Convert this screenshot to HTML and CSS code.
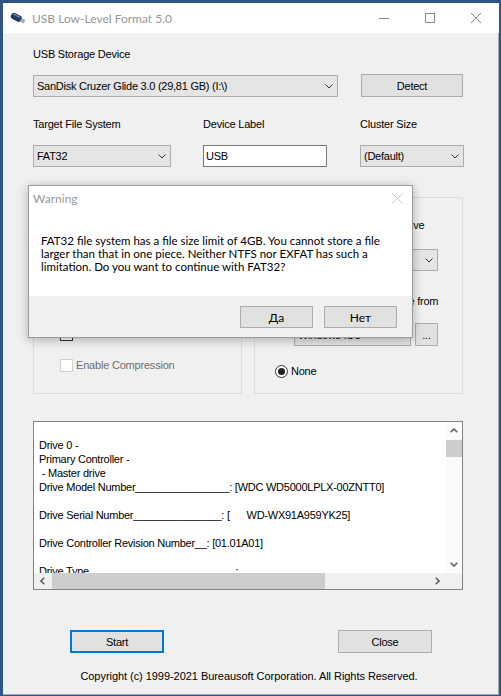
FILE: index.html
```html
<!DOCTYPE html>
<html lang="en">
<head>
<meta charset="utf-8">
<title>USB Low-Level Format 5.0</title>
<link rel="stylesheet" href="styles.css">
</head>
<body>
<div class="window">
  <div class="titlebar">
    <svg class="app-icon" width="16" height="12" viewBox="0 0 16 12">
      <g transform="rotate(28 8 6)">
        <rect x="0.5" y="3" width="11.5" height="6.5" rx="3" fill="#25395c"/>
        <rect x="11.3" y="4.3" width="4.2" height="4" rx="0.6" fill="#a2abb8"/>
        <path d="M2.6 4.6H9" stroke="#6f8ab8" stroke-width="1.2" stroke-linecap="round"/>
      </g>
    </svg>
    <span class="title">USB Low-Level Format 5.0</span>
    <div class="caption">
      <span class="cap-btn"><svg width="10" height="10" viewBox="0 0 10 10"><path d="M0 5.5H10" stroke="#8a8a8a"/></svg></span>
      <span class="cap-btn"><svg width="10" height="10" viewBox="0 0 10 10"><rect x="0.5" y="0.5" width="9" height="9" fill="none" stroke="#8a8a8a"/></svg></span>
      <span class="cap-btn"><svg width="10" height="10" viewBox="0 0 10 10"><path d="M0 0L10 10M10 0L0 10" stroke="#8a8a8a"/></svg></span>
    </div>
  </div>

  <div class="client">
    <div class="label">USB Storage Device</div>
    <div class="row-device">
      <div class="combo combo-device"><span class="value">SanDisk Cruzer Glide 3.0 (29,81 GB) (I:\)</span><svg class="chev" width="8" height="5" viewBox="0 0 8 5"><path d="M0.5 0.5L4 4L7.5 0.5" fill="none" stroke="#333"/></svg></div>
      <button class="btn btn-detect">Detect</button>
    </div>

    <div class="settings">
      <div class="label">Target File System</div>
      <div class="label">Device Label</div>
      <div class="label">Cluster Size</div>
      <div class="combo combo-fs"><span class="value">FAT32</span><svg class="chev" width="8" height="5" viewBox="0 0 8 5"><path d="M0.5 0.5L4 4L7.5 0.5" fill="none" stroke="#333"/></svg></div>
      <div class="textbox">USB</div>
      <div class="combo combo-cluster"><span class="value">(Default)</span><svg class="chev" width="8" height="5" viewBox="0 0 8 5"><path d="M0.5 0.5L4 4L7.5 0.5" fill="none" stroke="#333"/></svg></div>
    </div>

    <div class="groups">
      <div class="group group-options">
        <div class="check-row"><span class="checkbox"></span><span>Quick Format</span></div>
        <div class="check-row"><span class="checkbox"></span><span>Verify Sectors</span></div>
        <div class="check-row"><span class="checkbox"></span><span>Create Partition</span></div>
        <div class="check-row disabled"><span class="checkbox"></span><span>Enable Compression</span></div>
      </div>
      <div class="group group-boot">
        <div class="radio-row"><span class="radio"></span><span>Create a bootable USB drive</span></div>
        <div class="combo combo-boot"><span class="value">MS-DOS</span><svg class="chev" width="8" height="5" viewBox="0 0 8 5"><path d="M0.5 0.5L4 4L7.5 0.5" fill="none" stroke="#333"/></svg></div>
        <div class="radio-row r2"><span class="radio"></span><span>Use a bootable disk image from</span></div>
        <div class="image-row">
          <div class="combo combo-image"><span class="value">Windows ISO</span><span class="small-arrow">&#9662;</span></div>
          <button class="btn btn-browse">...</button>
        </div>
        <div class="radio-row r3"><span class="radio checked"><span class="dot"></span></span><span>None</span></div>
      </div>
    </div>

    <div class="log">
      <div class="log-text">Drive 0 -
Primary Controller -
 - Master drive
Drive Model Number________________: [WDC WD5000LPLX-00ZNTT0]

Drive Serial Number_______________: [      WD-WX91A959YK25]

Drive Controller Revision Number__: [01.01A01]

Drive Type_________________________: </div>
      <div class="vscroll">
        <span class="arrow"><svg width="8" height="5" viewBox="0 0 8 5"><path d="M0.7 4.3L4 1L7.3 4.3" fill="none" stroke="#606060" stroke-width="1.6"/></svg></span>
        <span class="vthumb"></span>
        <span class="spacer"></span>
        <span class="arrow"><svg width="8" height="5" viewBox="0 0 8 5"><path d="M0.7 0.7L4 4L7.3 0.7" fill="none" stroke="#606060" stroke-width="1.6"/></svg></span>
      </div>
      <div class="hscroll">
        <span class="harrow"><svg width="5" height="8" viewBox="0 0 5 8"><path d="M4.3 0.7L1 4L4.3 7.3" fill="none" stroke="#606060" stroke-width="1.6"/></svg></span>
        <span class="hthumb"></span>
        <span class="spacer"></span>
        <span class="harrow"><svg width="5" height="8" viewBox="0 0 5 8"><path d="M0.7 0.7L4 4L0.7 7.3" fill="none" stroke="#606060" stroke-width="1.6"/></svg></span>
      </div>
      <div class="corner"></div>
    </div>

    <div class="actions">
      <button class="btn btn-start">Start</button>
      <button class="btn btn-close">Close</button>
    </div>

    <div class="copyright">Copyright (c) 1999-2021 Bureausoft Corporation. All Rights Reserved.</div>
  </div>

  <div class="msgbox">
    <div class="msg-title">
      <span>Warning</span>
      <svg class="msg-x" width="11" height="11" viewBox="0 0 11 11"><path d="M0 0L11 11M11 0L0 11" stroke="#c8c8c8"/></svg>
    </div>
    <div class="msg-body">FAT32 file system has a file size limit of 4GB. You cannot store a file<br>larger than that in one piece. Neither NTFS nor EXFAT has such a<br>limitation. Do you want to continue with FAT32?</div>
    <div class="msg-footer">
      <button class="btn msg-btn">Да</button>
      <button class="btn msg-btn">Нет</button>
    </div>
  </div>
</div>
</body>
</html>
```

FILE: styles.css
```css
* { box-sizing: border-box; }
html, body { margin: 0; padding: 0; }
body {
  width: 501px;
  height: 696px;
  overflow: hidden;
  background: #2f5486;
  font-family: "Liberation Sans", Arial, sans-serif;
  font-size: 11px;
  color: #000;
}

.window {
  position: relative;
  margin: 3px 0 0 3px;
  width: 496px;
  height: 692px;
  background: #f0f0f0;
}

.titlebar {
  height: 30px;
  background: #fff;
  display: flex;
  align-items: center;
}
.app-icon { margin-left: 7px; flex: none; }
.title {
  margin-left: 6px;
  font-family: Lato, "Noto Sans", sans-serif;
  font-size: 12px;
  color: #999;
}
.caption { margin-left: auto; display: flex; height: 30px; }
.cap-btn {
  width: 46px;
  height: 30px;
  display: flex;
  align-items: center;
  justify-content: center;
}

.client {
  height: 662px;
  padding: 14px 0 0 30px;
  border-right: 1px solid #a8a8a8;
  border-bottom: 1px solid #a8a8a8;
}

.label {
  height: 14px;
  line-height: 14px;
  letter-spacing: -0.2px;
  white-space: nowrap;
}

.combo {
  display: flex;
  align-items: center;
  height: 22px;
  background: #e5e5e5;
  border: 1px solid #adadad;
  padding: 0 4px 0 3px;
  letter-spacing: -0.25px;
  white-space: nowrap;
}
.combo .value { flex: 1; overflow: hidden; }
.chev { flex: none; }

.btn {
  font: inherit;
  letter-spacing: -0.25px;
  color: #000;
  background: #e1e1e1;
  border: 1px solid #adadad;
  padding: 0;
  margin: 0;
  height: 23px;
  display: flex;
  align-items: center;
  justify-content: center;
}

.row-device { display: flex; margin-top: 13px; height: 23px; }
.combo-device { width: 305px; margin-top: 1px; }
.btn-detect { width: 102px; margin-left: 23px; }

.settings {
  display: grid;
  grid-template-columns: 170px 157px 104px;
  grid-template-rows: 14px 22px;
  row-gap: 14px;
  margin-top: 20px;
}
.combo-fs { width: 138px; }
.textbox {
  width: 124px;
  height: 22px;
  background: #fff;
  border: 1px solid #7a7a7a;
  padding: 0 2px;
  display: flex;
  align-items: center;
  letter-spacing: -0.25px;
}
.combo-cluster { width: 104px; }

.groups { display: flex; gap: 12px; margin-top: 30px; }
.group { width: 209px; height: 197px; border: 1px solid #dcdcdc; }

.group-options {
  display: flex;
  flex-direction: column;
  gap: 17px;
  padding: 67px 0 0 26px;
}
.check-row {
  display: flex;
  align-items: center;
  gap: 3px;
  height: 14px;
  letter-spacing: -0.2px;
  white-space: nowrap;
}
.checkbox {
  width: 13px;
  height: 13px;
  border: 1px solid #333;
  background: #fff;
  flex: none;
}
.check-row.disabled { color: #6d6d6d; }
.check-row.disabled .checkbox { border-color: #d0d0d0; }

.group-boot {
  display: flex;
  flex-direction: column;
  padding: 20px 0 0 20px;
}
.radio-row {
  display: flex;
  align-items: center;
  gap: 3px;
  height: 14px;
  letter-spacing: -0.25px;
  white-space: nowrap;
}
.radio {
  width: 13px;
  height: 13px;
  border-radius: 50%;
  border: 1px solid #333;
  background: #fff;
  flex: none;
  display: flex;
  align-items: center;
  justify-content: center;
}
.radio .dot {
  width: 7px;
  height: 7px;
  border-radius: 50%;
  background: #222;
}
.combo-boot { width: 144px; margin: 17px 0 0 19px; }
.radio-row.r2 { margin-top: 23px; }
.image-row { display: flex; gap: 4px; height: 23px; margin: 15px 0 0 19px; }
.combo-image { width: 117px; height: 23px; }
.small-arrow { font-size: 8px; color: #333; }
.btn-browse { width: 23px; }
.radio-row.r3 { margin-top: 18px; }

.log {
  margin-top: 27px;
  width: 430px;
  height: 169px;
  border: 1px solid #828282;
  background: #fff;
  display: grid;
  grid-template-columns: 1fr 16px;
  grid-template-rows: 1fr 16px;
}
.log-text {
  overflow: hidden;
  white-space: pre;
  padding: 16px 0 0 5px;
  line-height: 14px;
  letter-spacing: -0.25px;
}
.vscroll {
  background: #fbfbfb;
  display: flex;
  flex-direction: column;
}
.vscroll .arrow {
  height: 17px;
  display: flex;
  align-items: center;
  justify-content: center;
  flex: none;
}
.vthumb {
  margin-top: 1px;
  height: 17px;
  background: #cdcdcd;
  flex: none;
}
.spacer { flex: 1; }
.hscroll {
  background: #f0f0f0;
  display: flex;
}
.harrow {
  width: 17px;
  display: flex;
  align-items: center;
  justify-content: center;
  flex: none;
}
.hthumb {
  margin-left: 1px;
  width: 273px;
  background: #cdcdcd;
  flex: none;
}
.corner { background: #f0f0f0; }

.actions { display: flex; margin-top: 40px; }
.btn-start { width: 94px; margin-left: 37px; border: 2px solid #0078d7; }
.btn-close { width: 94px; margin-left: 174px; }

.copyright {
  margin: 16px 0 0 -30px;
  width: 496px;
  padding-right: 4px;
  text-align: center;
  line-height: 14px;
  letter-spacing: -0.05px;
  white-space: nowrap;
}

.msgbox {
  position: absolute;
  left: 25px;
  top: 182px;
  width: 385px;
  height: 153px;
  background: #fff;
  border: 1px solid #9b9b9b;
  box-shadow: 0 2px 10px rgba(0, 0, 0, 0.28);
  font-family: Lato, "Noto Sans", sans-serif;
  display: flex;
  flex-direction: column;
}
.msg-title {
  height: 24px;
  flex: none;
  display: flex;
  align-items: center;
  padding: 0 9px 0 4px;
  font-size: 12px;
  color: #9a9a9a;
}
.msg-x { margin-left: auto; }
.msg-body {
  height: 86px;
  flex: none;
  padding: 24px 0 0 12px;
  font-size: 11.5px;
  line-height: 13px;
  white-space: nowrap;
}
.msg-footer {
  height: 41px;
  flex: none;
  background: #f0f0f0;
  display: flex;
  justify-content: flex-end;
  gap: 11px;
  padding: 10px 15px 0 0;
}
.msg-btn {
  width: 73px;
  height: 22px;
  font-family: Lato, "Noto Sans", sans-serif;
  font-size: 12px;
  letter-spacing: 0;
}
```
